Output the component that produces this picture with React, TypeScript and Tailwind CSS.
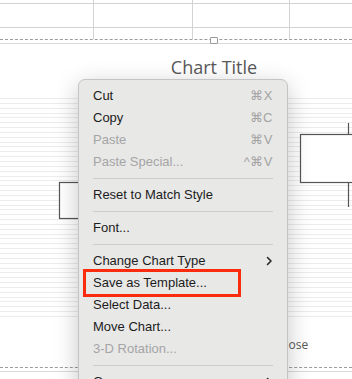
const gridLines = Array.from({ length: 46 }, (_, i) => 3 + i * (218 / 45));

type Item =
  | { sep: true }
  | { sep?: false; label: string; shortcut?: string; disabled?: boolean; sub?: boolean };

const items: Item[] = [
  { label: "Cut", shortcut: "⌘X" },
  { label: "Copy", shortcut: "⌘C" },
  { label: "Paste", shortcut: "⌘V", disabled: true },
  { label: "Paste Special...", shortcut: "^⌘V", disabled: true },
  { sep: true },
  { label: "Reset to Match Style" },
  { sep: true },
  { label: "Font..." },
  { sep: true },
  { label: "Change Chart Type", sub: true },
  { label: "Save as Template..." },
  { label: "Select Data..." },
  { label: "Move Chart..." },
  { label: "3-D Rotation...", disabled: true },
  { sep: true },
  { label: "Group", sub: true },
  { label: "Bring to Front", sub: true },
];

function Chevron() {
  return (
    <svg width="7" height="10" viewBox="0 0 7 10" className="shrink-0">
      <polyline points="1.5,1.5 5,5 1.5,8.5" fill="none" stroke="#2a2a2a" strokeWidth="1.6" strokeLinecap="round" strokeLinejoin="round" />
    </svg>
  );
}

function Cell({ last, bottom }: { last?: boolean; bottom?: boolean }) {
  return <div className={`${last ? "" : "border-r"} ${bottom ? "border-b" : ""} border-[#d3d3d3]`} />;
}

export default function App() {
  return (
    <div className="relative w-[352px] h-[379px] overflow-hidden bg-white" style={{ fontFamily: '"Liberation Sans", Arial, sans-serif' }}>
      {/* spreadsheet cells above the chart */}
      <div className="grid grid-cols-[94px_99px_97px_1fr] grid-rows-[4px_24px_11px]">
        <Cell bottom />
        <Cell bottom />
        <Cell bottom />
        <Cell last bottom />
        <Cell bottom />
        <Cell bottom />
        <Cell bottom />
        <Cell last bottom />
        <Cell />
        <Cell />
        <Cell />
        <Cell last />
      </div>

      {/* chart object */}
      <div className="border-t border-dashed border-[#9c9c9c]">
        <div className="mt-[3px] border-t border-[#dadada]">
          <div className="w-[428px] pt-[11px] text-center text-[18px] leading-[24px] text-[#595959]" style={{ fontFamily: '"Open Sans", sans-serif' }}>
            Chart Title
          </div>
          <svg width="352" height="225" className="mt-[16px] block">
            {gridLines.map((y) => (
              <line key={y} x1="0" x2="352" y1={Math.round(y) + 0.5} y2={Math.round(y) + 0.5} stroke="#ececec" strokeWidth="1" />
            ))}
            <rect x="59.5" y="87.5" width="60" height="36" fill="white" stroke="#555" strokeWidth="1.2" />
            <line x1="348.5" x2="348.5" y1="28" y2="39" stroke="#555" strokeWidth="1.2" />
            <line x1="348.5" x2="348.5" y1="87" y2="112" stroke="#555" strokeWidth="1.2" />
            <rect x="300.5" y="39.5" width="70" height="48" fill="white" stroke="#555" strokeWidth="1.2" />
          </svg>
          <div className="mt-[17px] pl-[278px] text-[12px] leading-[16px] text-[#595959]" style={{ fontFamily: '"Open Sans", sans-serif' }}>
            Close
          </div>
          <div className="mt-[14px] border-t border-dashed border-[#9c9c9c]" />
          <div className="mt-[3px] border-t border-[#dadada]" />
        </div>
      </div>

      {/* selection handle */}
      <div className="absolute left-[210px] top-[37px] w-[8px] h-[7px] rounded-[1px] border border-[#9a9a9a] bg-white" />

      {/* context menu */}
      <div className="absolute left-[78px] top-[79px] w-[210px] rounded-[7px] border border-[#c4c4c4] bg-[#e8e8e7] pt-[5px] shadow-[0_6px_24px_rgba(0,0,0,0.22)]">
        {items.map((item, i) =>
          item.sep ? (
            <div key={i} className="h-[11px] flex items-center px-[14px]">
              <div className="h-px w-full bg-[#cdcdcd]" />
            </div>
          ) : (
            <div
              key={i}
              className={`h-[22px] flex items-center justify-between px-[14px] text-[13px] ${item.disabled ? "text-[#a5a5a5]" : "text-[#1c1c1c]"}`}
            >
              <span>{item.label}</span>
              {item.shortcut && <span className="text-[#a3a3a3] tracking-[0.5px]">{item.shortcut}</span>}
              {item.sub && <Chevron />}
            </div>
          ),
        )}
      </div>

      {/* highlight annotation */}
      <div className="absolute left-[83px] top-[269px] w-[158px] h-[28px] border-[3px] border-[#fb2c0d]" />
    </div>
  );
}
